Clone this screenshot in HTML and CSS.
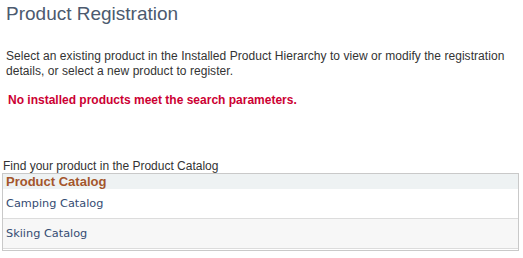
FILE: index.html
```html
<!DOCTYPE html>
<html lang="en">

<head>
    <meta charset="UTF-8">
    <title>Product Registration</title>
    <link rel="stylesheet" href="styles.css">
</head>

<body>
    <!-- Page title -->
    <h1 class="page-title">Product Registration</h1>

    <p class="intro">Select an existing product in the Installed Product Hierarchy to view or modify the registration details, or select a new product to register.</p>

    <p class="error-msg">No installed products meet the search parameters.</p>

    <!-- Catalog list -->
    <div class="find-label">Find your product in the Product Catalog</div>
    <div class="catalog">
        <div class="catalog-head">Product Catalog</div>
        <div class="catalog-row"><a href="#">Camping Catalog</a></div>
        <div class="catalog-row alt"><a href="#">Skiing Catalog</a></div>
    </div>
</body>

</html>
```

FILE: styles.css
```css
* {
    box-sizing: border-box;
    margin: 0;
    padding: 0;
}

body {
    font-family: "Liberation Sans", Arial, sans-serif;
    font-size: 12px;
    color: #333;
    background: #fff;
}

.page-title {
    font-size: 19px;
    font-weight: normal;
    line-height: 22px;
    color: #4c5a6f;
    padding: 3px 0 0 6px;
}

.intro {
    margin-top: 24px;
    padding: 0 7px 0 6px;
    line-height: 15px;
    letter-spacing: 0.05px;
}

.error-msg {
    margin-top: 14px;
    padding-left: 8px;
    line-height: 15px;
    font-weight: bold;
    color: #cc0033;
}

.find-label {
    margin-top: 51px;
    padding-left: 3px;
    line-height: 14px;
}

.catalog {
    margin-left: 2px;
    width: 517px;
    border: 1px solid #c9c9c9;
    padding-bottom: 1px;
}

.catalog-head {
    background-color: #eef2f3;
    color: #a4562c;
    font-weight: bold;
    font-size: 13px;
    line-height: 15px;
    padding-left: 3px;
}

.catalog-row {
    height: 30px;
    line-height: 29px;
    padding-left: 3px;
    border-bottom: 1px solid #dcdcdc;
    font-family: "DejaVu Sans", Verdana, sans-serif;
    font-size: 11.3px;
}

.catalog-row.alt {
    background-color: #f7f7f7;
}

.catalog-row a {
    color: #354c73;
    text-decoration: none;
}
```
